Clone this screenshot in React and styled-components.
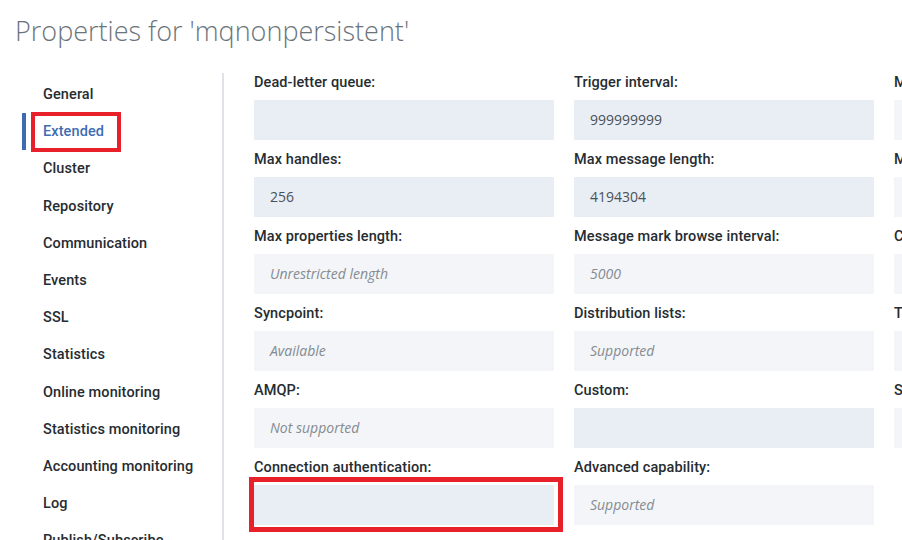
import React from "react";
import styled, { createGlobalStyle } from "styled-components";

const GlobalStyle = createGlobalStyle`
  html, body {
    margin: 0;
    background: #fff;
    overflow: hidden;
  }
  body {
    font-family: "Open Sans", "Noto Sans", sans-serif;
    color: #21272a;
  }
`;

const PageStyles = styled.div`
  width: 902px;
  height: 540px;
  overflow: hidden;
`;

const Title = styled.h1`
  margin: 0;
  padding: 13px 0 0 15px;
  height: 61px;
  box-sizing: border-box;
  font-size: 27px;
  line-height: 36px;
  font-weight: 300;
  color: #6b747c;
  white-space: nowrap;
`;

const Body = styled.div`
  display: flex;
  padding-top: 12px;
`;

const Sidebar = styled.nav`
  width: 224px;
  flex-shrink: 0;
  border-right: 2px solid #dfe3e8;
  height: 470px;
  box-sizing: border-box;
  padding: 3px 0 0 22px;
`;

const NavItem = styled.div`
  position: relative;
  height: 37.2px;
  display: flex;
  align-items: center;
  padding-left: 17px;
  border-left: 4px solid ${(p) => (p.$active ? "#3d6cb3" : "transparent")};
  font-family: Roboto, "Open Sans", sans-serif;
  font-size: 14.5px;
  font-weight: 500;
  letter-spacing: 0.1px;
  color: ${(p) => (p.$active ? "#3f6db2" : "#262c31")};
  white-space: nowrap;
`;

const NavHighlight = styled.span`
  position: absolute;
  left: 5px;
  top: -1px;
  width: 90px;
  height: 40px;
  border: 4px solid #e8202a;
  box-sizing: border-box;
`;

const Content = styled.div`
  flex: 1;
  padding-left: 30px;
  overflow: hidden;
`;

const FieldGrid = styled.div`
  display: grid;
  grid-template-columns: repeat(3, 300px);
  column-gap: 20px;
`;

const Field = styled.div`
  padding-bottom: 10px;
`;

const Label = styled.div`
  font-family: Roboto, "Open Sans", sans-serif;
  font-size: 14.5px;
  font-weight: 500;
  letter-spacing: 0.1px;
  line-height: 20px;
  margin-bottom: 7px;
  color: #262c31;
  white-space: nowrap;
`;

const ValueBox = styled.div`
  position: relative;
  height: 40px;
  box-sizing: border-box;
  padding: 0 16px 1px;
  display: flex;
  align-items: center;
  background: ${(p) => (p.$readOnly ? "#f3f5f8" : "#e9edf4")};
  font-size: 14px;
  font-style: ${(p) => (p.$readOnly ? "italic" : "normal")};
  color: ${(p) => (p.$readOnly ? "#858b91" : "#4a5157")};
`;

const BoxHighlight = styled.span`
  position: absolute;
  left: -5px;
  top: -8px;
  right: -9px;
  bottom: -7px;
  border: 5px solid #e8202a;
`;

const navItems = [
  "General",
  "Extended",
  "Cluster",
  "Repository",
  "Communication",
  "Events",
  "SSL",
  "Statistics",
  "Online monitoring",
  "Statistics monitoring",
  "Accounting monitoring",
  "Log",
  "Publish/Subscribe",
];

// row-major: three columns per row
const fields = [
  { label: "Dead-letter queue:", value: "" },
  { label: "Trigger interval:", value: "999999999" },
  { label: "Max uncommitted messages:", value: "", readOnly: true },
  { label: "Max handles:", value: "256" },
  { label: "Max message length:", value: "4194304" },
  { label: "Max priority:", value: "", readOnly: true },
  { label: "Max properties length:", value: "Unrestricted length", readOnly: true },
  { label: "Message mark browse interval:", value: "5000", readOnly: true },
  { label: "Command level:", value: "", readOnly: true },
  { label: "Syncpoint:", value: "Available", readOnly: true },
  { label: "Distribution lists:", value: "Supported", readOnly: true },
  { label: "Telemetry:", value: "", readOnly: true },
  { label: "AMQP:", value: "Not supported", readOnly: true },
  { label: "Custom:", value: "" },
  { label: "Security policy:", value: "", readOnly: true },
  { label: "Connection authentication:", value: "", highlight: true },
  { label: "Advanced capability:", value: "Supported", readOnly: true },
];

const App = () => {
  return (
    <PageStyles>
      <GlobalStyle />
      <Title>Properties for 'mqnonpersistent'</Title>
      <Body>
        <Sidebar>
          {navItems.map((item) => (
            <NavItem key={item} $active={item === "Extended"}>
              {item === "Extended" && <NavHighlight />}
              {item}
            </NavItem>
          ))}
        </Sidebar>
        <Content>
          <FieldGrid>
            {fields.map((f) => (
              <Field key={f.label}>
                <Label>{f.label}</Label>
                <ValueBox $readOnly={f.readOnly}>
                  {f.value}
                  {f.highlight && <BoxHighlight />}
                </ValueBox>
              </Field>
            ))}
          </FieldGrid>
        </Content>
      </Body>
    </PageStyles>
  );
};

export default App;
